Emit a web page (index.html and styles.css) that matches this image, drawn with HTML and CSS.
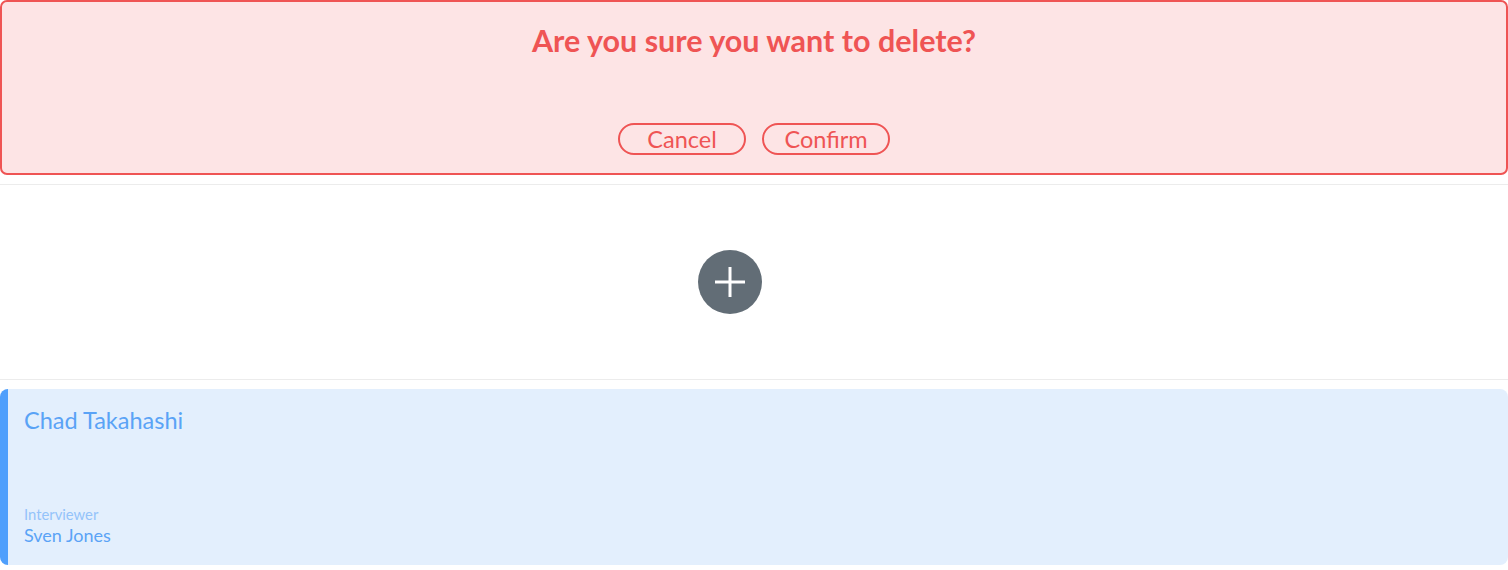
FILE: index.html
```html
<!DOCTYPE html>
<html>
<head>
<meta charset="utf-8">
<link rel="stylesheet" href="styles.css">
</head>
<body>
<div class="confirm">
  <h2 class="confirm-title">Are you sure you want to delete?</h2>
  <div class="confirm-actions">
    <button class="pill">Cancel</button>
    <button class="pill">Confirm</button>
  </div>
</div>
<div class="add-section">
  <button class="add-btn" aria-label="Add">
    <svg width="32" height="32" viewBox="0 0 32 32"><path d="M16 1v30M1 16h30" stroke="#fff" stroke-width="3" fill="none"/></svg>
  </button>
</div>
<div class="card">
  <div class="card-name">Chad Takahashi</div>
  <div class="card-meta">
    <div class="card-label">Interviewer</div>
    <div class="card-value">Sven Jones</div>
  </div>
</div>
</body>
</html>
```
FILE: styles.css
```css
* { box-sizing: border-box; }
html, body { margin: 0; padding: 0; background: #fff; }
body { font-family: Lato, "Open Sans", sans-serif; }

.confirm {
  height: 175px;
  border: 2px solid #ef5454;
  border-radius: 7px;
  background: #fde4e5;
  display: flex;
  flex-direction: column;
  align-items: center;
  padding-top: 20px;
}
.confirm-title {
  margin: 0;
  font-size: 30.5px;
  font-weight: 700;
  color: #ef5454;
  line-height: 36px;
}
.confirm-actions {
  margin-top: 65px;
  display: flex;
  gap: 16px;
}
.pill {
  width: 128px;
  height: 32px;
  border: 2px solid #ef5454;
  border-radius: 16px;
  background: transparent;
  color: #ef5454;
  font-family: inherit;
  font-size: 23.5px;
  line-height: 26px;
  padding: 0;
}

.add-section {
  margin-top: 9px;
  height: 196px;
  border-top: 1px solid #ececec;
  border-bottom: 1px solid #ececec;
  display: flex;
  align-items: center;
  justify-content: center;
  padding-right: 48px;
}
.add-btn {
  width: 64px;
  height: 64px;
  border-radius: 50%;
  border: none;
  background: #626d76;
  display: flex;
  align-items: center;
  justify-content: center;
  padding: 0;
}

.card {
  margin-top: 9px;
  height: 176px;
  background: #e3effd;
  border-left: 8px solid #4f9ffc;
  border-radius: 8px;
  padding: 17px 16px 19px 16px;
  display: flex;
  flex-direction: column;
  justify-content: space-between;
}
.card-name {
  font-size: 23.5px;
  color: #5aa3f6;
  line-height: 28px;
}
.card-label {
  font-size: 14.8px;
  font-weight: 400;
  color: #94c3fa;
  line-height: 19px;
}
.card-value {
  font-size: 18px;
  color: #5aa3f6;
  line-height: 22px;
}
```
